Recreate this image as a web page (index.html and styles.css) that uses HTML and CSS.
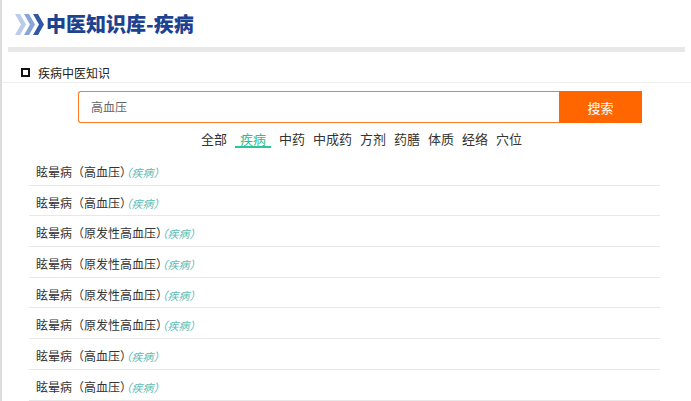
FILE: index.html
```html
<!DOCTYPE html>
<html lang="zh-CN">
<head>
    <meta charset="UTF-8">
    <title>中医知识库-疾病</title>
    <link rel="stylesheet" href="styles.css">
</head>
<body>
<div class="page">
    <div class="header">
        <svg class="logo" width="30" height="21" viewBox="0 0 30 21">
            <polygon points="0,0 5,0 11,10.5 5,21 0,21 6,10.5" fill="#b9cdea"/>
            <polygon points="9,0 14,0 20,10.5 14,21 9,21 15,10.5" fill="#86a5d9"/>
            <polygon points="18,0 23,0 29,10.5 23,21 18,21 24,10.5" fill="#2f58a6"/>
        </svg>
        <h1>中医知识库-疾病</h1>
    </div>
    <div class="bar"></div>

    <div class="section-title">
        <span class="square"></span>
        <span>疾病中医知识</span>
    </div>

    <div class="search">
        <div class="search-input">高血压</div>
        <button class="search-btn">搜索</button>
    </div>

    <div class="tabs">
        <span class="tab">全部</span>
        <span class="tab active">疾病</span>
        <span class="tab">中药</span>
        <span class="tab">中成药</span>
        <span class="tab">方剂</span>
        <span class="tab">药膳</span>
        <span class="tab">体质</span>
        <span class="tab">经络</span>
        <span class="tab">穴位</span>
    </div>

    <ul class="results">
        <li>眩晕病（高血压<span class="rp">）</span><em>（疾病）</em></li>
        <li>眩晕病（高血压<span class="rp">）</span><em>（疾病）</em></li>
        <li>眩晕病（原发性高血压<span class="rp">）</span><em>（疾病）</em></li>
        <li>眩晕病（原发性高血压<span class="rp">）</span><em>（疾病）</em></li>
        <li>眩晕病（原发性高血压<span class="rp">）</span><em>（疾病）</em></li>
        <li>眩晕病（原发性高血压<span class="rp">）</span><em>（疾病）</em></li>
        <li>眩晕病（高血压<span class="rp">）</span><em>（疾病）</em></li>
        <li>眩晕病（高血压<span class="rp">）</span><em>（疾病）</em></li>
    </ul>
</div>
</body>
</html>
```

FILE: styles.css
```css
body {
    margin: 0;
    font-family: "Noto Sans CJK SC", "Noto Sans", sans-serif;
    background-color: #fff;
    color: #333;
}
.page {
    border-left: 2px solid #dcdcdc;
    min-height: 401px;
    box-sizing: border-box;
}
.header {
    display: flex;
    align-items: center;
    padding: 10px 0 0 13px;
    height: 28px;
}
.logo {
    margin-right: 1px;
}
.header h1 {
    margin: 0;
    font-size: 20px;
    font-weight: 900;
    color: #1d428f;
    line-height: 26px;
}
.bar {
    margin: 9px 6px 0 6px;
    height: 5px;
    background-color: #e8e8e8;
}
.section-title {
    display: flex;
    align-items: center;
    height: 20px;
    padding: 10px 0 0 19px;
    font-size: 12px;
    color: #222;
    border-bottom: 1px solid #eee;
}
.square {
    width: 5px;
    height: 5px;
    border: 2px solid #111;
    margin-right: 8px;
}
.search {
    display: flex;
    margin: 8px 0 0 76px;
    width: 564px;
    height: 32px;
}
.search-input {
    flex: 1;
    border: 1px solid #ff7a22;
    border-right: none;
    border-radius: 3px 0 0 3px;
    padding-left: 12px;
    font-size: 12px;
    color: #666;
    line-height: 30px;
}
.search-btn {
    width: 83px;
    border: none;
    background-color: #ff6600;
    color: #fff;
    font-family: inherit;
    font-size: 13px;
    padding: 0;
}
.tabs {
    display: flex;
    justify-content: center;
    gap: 8px;
    margin-top: 8px;
    padding-left: 30px;
    font-size: 13px;
    color: #333;
}
.tab {
    line-height: 15px;
    padding-bottom: 2px;
}
.tab.active {
    color: #2dbf8f;
    padding: 0 5px;
    border-bottom: 2px solid #2dc597;
}
.results {
    list-style: none;
    margin: 7px 0 0 27px;
    padding: 0;
    width: 631px;
}
.results li {
    height: 25.7px;
    padding: 4px 0 0 7px;
    line-height: 26px;
    font-size: 12px;
    color: #333;
    border-bottom: 1px solid #e8e8e8;
}
/* закрывающая скобка занимает половину ширины */
.results .rp {
    letter-spacing: -6px;
}
.results em {
    font-size: 11px;
    color: #5cbcb4;
    font-style: italic;
}
```
